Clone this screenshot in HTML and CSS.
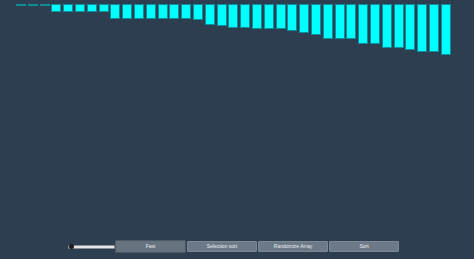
FILE: index.html
```html
<!DOCTYPE html>
<html>
<head>
<meta charset="utf-8">
<link rel="stylesheet" href="styles.css">
</head>
<body>
<div class="bars">
  <div class="bar" style="height:2px"></div>
  <div class="bar" style="height:2px"></div>
  <div class="bar" style="height:2px"></div>
  <div class="bar" style="height:8px"></div>
  <div class="bar" style="height:8px"></div>
  <div class="bar" style="height:8px"></div>
  <div class="bar" style="height:8px"></div>
  <div class="bar" style="height:8px"></div>
  <div class="bar" style="height:15px"></div>
  <div class="bar" style="height:15px"></div>
  <div class="bar" style="height:15px"></div>
  <div class="bar" style="height:15px"></div>
  <div class="bar" style="height:15px"></div>
  <div class="bar" style="height:15px"></div>
  <div class="bar" style="height:15px"></div>
  <div class="bar" style="height:16px"></div>
  <div class="bar" style="height:21px"></div>
  <div class="bar" style="height:22px"></div>
  <div class="bar" style="height:24px"></div>
  <div class="bar" style="height:24px"></div>
  <div class="bar" style="height:25px"></div>
  <div class="bar" style="height:25px"></div>
  <div class="bar" style="height:25px"></div>
  <div class="bar" style="height:27px"></div>
  <div class="bar" style="height:29px"></div>
  <div class="bar" style="height:31px"></div>
  <div class="bar" style="height:35px"></div>
  <div class="bar" style="height:35px"></div>
  <div class="bar" style="height:35px"></div>
  <div class="bar" style="height:40px"></div>
  <div class="bar" style="height:40px"></div>
  <div class="bar" style="height:44px"></div>
  <div class="bar" style="height:44px"></div>
  <div class="bar" style="height:46px"></div>
  <div class="bar" style="height:48px"></div>
  <div class="bar" style="height:48px"></div>
  <div class="bar" style="height:51px"></div>
</div>
<div class="controls">
  <input class="speed" type="range" min="0" max="100" value="0">
  <button class="btn btn-active">Fast</button>
  <button class="btn">Selection sort</button>
  <button class="btn">Randomize Array</button>
  <button class="btn">Sort</button>
</div>
</body>
</html>
```
FILE: styles.css
```css
html, body {
  margin: 0;
  padding: 0;
}
body {
  width: 474px;
  height: 259px;
  background: #2c3e50;
  font-family: "Liberation Sans", Arial, sans-serif;
  overflow: hidden;
  display: flex;
  flex-direction: column;
}
.bars {
  display: flex;
  align-items: flex-start;
  gap: 1.8px;
  padding: 4px 0 0 16px;
  height: 236px;
  box-sizing: border-box;
}
.bar {
  width: 10px;
  box-sizing: border-box;
  background: #00ffff;
  border: 1px solid rgba(22, 50, 70, 0.55);
}
.controls {
  display: flex;
  align-items: center;
  padding-left: 68px;
  height: 13px;
  margin-top: 4px;
}
.speed {
  -webkit-appearance: none;
  appearance: none;
  width: 47px;
  height: 4px;
  margin: 0;
  padding: 0;
  background: #e6e6e6;
  border: 1px solid #8a8f95;
  border-radius: 1px;
  box-sizing: border-box;
}
.speed::-webkit-slider-thumb {
  -webkit-appearance: none;
  appearance: none;
  width: 5px;
  height: 5px;
  margin-top: -1px;
  border-radius: 50%;
  background: #1c1c1c;
  border: none;
}
.btn {
  width: 70px;
  height: 11px;
  margin: 0 0 0 1px;
  padding: 0;
  background: #6c7a87;
  color: #e9edf0;
  border: 1px solid #7d8a96;
  border-radius: 1px;
  font-family: "Liberation Sans", Arial, sans-serif;
  font-size: 5px;
  line-height: 9px;
  box-sizing: border-box;
}
.btn-active {
  width: 71px;
  height: 13px;
  margin-left: 0;
  border: 1px solid #4c5864;
  background: #66737f;
}
```
